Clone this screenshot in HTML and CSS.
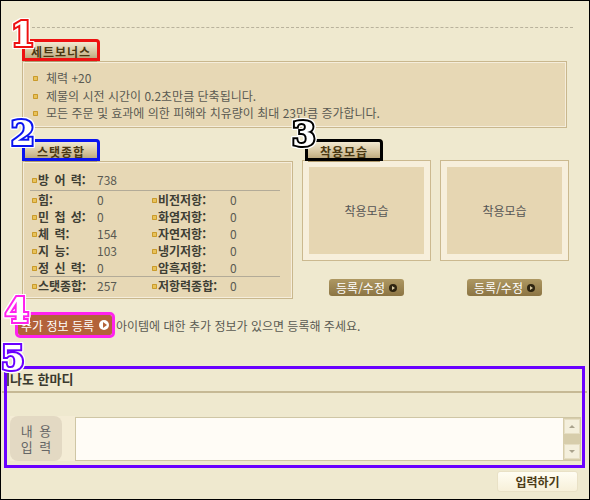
FILE: index.html
```html
<!DOCTYPE html>
<html lang="ko">
<head>
    <meta charset="UTF-8">
    <meta name="viewport" content="width=device-width, initial-scale=1.0">
    <title>아이템 정보</title>
    <link rel="stylesheet" href="styles.css">
</head>
<body>
    <div class="page">
        <div class="dash"></div>
        <div class="main">
            <div class="tab mark-red"><span>세트보너스</span><b class="num num-red">1</b></div>
            <ul class="box bonus">
                <li><i class="dot"></i>체력 +20</li>
                <li><i class="dot"></i>제물의 시전 시간이 0.2초만큼 단축됩니다.</li>
                <li><i class="dot"></i>모든 주문 및 효과에 의한 피해와 치유량이 최대 23만큼 증가합니다.</li>
            </ul>

            <div class="row">
                <div class="stat-col">
                    <div class="tab mark-blue"><span>스탯종합</span><b class="num num-blue">2</b></div>
                    <div class="box stats">
                        <div class="grid">
                            <div class="st"><i class="dot"></i><em>방 어 력:</em>738</div>
                        </div>
                        <div class="sep"></div>
                        <div class="grid">
                            <div class="st"><i class="dot"></i><em>힘:</em>0</div>
                            <div class="st st2"><i class="dot"></i><em>비전저항:</em>0</div>
                            <div class="st"><i class="dot"></i><em>민 첩 성:</em>0</div>
                            <div class="st st2"><i class="dot"></i><em>화염저항:</em>0</div>
                            <div class="st"><i class="dot"></i><em>체 력:</em>154</div>
                            <div class="st st2"><i class="dot"></i><em>자연저항:</em>0</div>
                            <div class="st"><i class="dot"></i><em>지 능:</em>103</div>
                            <div class="st st2"><i class="dot"></i><em>냉기저항:</em>0</div>
                            <div class="st"><i class="dot"></i><em>정 신 력:</em>0</div>
                            <div class="st st2"><i class="dot"></i><em>암흑저항:</em>0</div>
                        </div>
                        <div class="sep sep2"></div>
                        <div class="grid">
                            <div class="st"><i class="dot"></i><em>스탯종합:</em>257</div>
                            <div class="st st2"><i class="dot"></i><em>저항력종합:</em>0</div>
                        </div>
                    </div>
                </div>

                <div class="wear-col">
                    <div class="tab tab-wear mark-black"><span>착용모습</span><b class="num num-black">3</b></div>
                    <div class="frames">
                        <div class="frame"><div class="pic">착용모습</div></div>
                        <div class="frame"><div class="pic">착용모습</div></div>
                    </div>
                    <div class="btns">
                        <div class="cell"><a class="reg">등록/수정<i class="ico-dark"></i></a></div>
                        <div class="cell"><a class="reg">등록/수정<i class="ico-dark"></i></a></div>
                    </div>
                </div>
            </div>

            <div class="extra">
                <a class="add mark-pink">추가 정보 등록<i class="ico-white"></i><b class="num num-pink">4</b></a>
                <span class="note">아이템에 대한 추가 정보가 있으면 등록해 주세요.</span>
            </div>
        </div>

        <div class="comment">
            <div class="mark-violet"></div>
            <b class="num num-violet">5</b>
            <div class="c-head">나도 한마디</div>
            <div class="c-body">
                <div class="c-label"><span>내 용<br>입 력</span></div>
                <div class="c-input">
                    <div class="sb">
                        <div class="sb-btn"><i class="up"></i></div>
                        <div class="sb-btn"><i class="down"></i></div>
                    </div>
                </div>
            </div>
        </div>
        <div class="submit-row">
            <button class="submit">입력하기</button>
        </div>
    </div>
</body>
</html>
```

FILE: styles.css
```css
* {
    box-sizing: border-box;
}
body {
    margin: 0;
    font-family: "Noto Sans CJK KR", "Noto Sans", sans-serif;
    font-size: 12px;
    color: #5a5a52;
}
.page {
    width: 590px;
    height: 500px;
    border: 1px solid #000;
    background: #efe9cf;
    overflow: hidden;
}
.dash {
    margin: 26px 16px 0 21px;
    border-top: 1px dashed #b9b29c;
}
.main {
    margin: 11px 20px 0 21px;
}

/* tabs */
.tab {
    position: relative;
    width: 78px;
    height: 22px;
    padding: 2px 2px 0;
    background: #f4ecd6;
    border: 1px solid #cdbb92;
    border-bottom: 0;
    border-radius: 0 4px 0 0;
}
.tab span {
    display: block;
    height: 20px;
    line-height: 20px;
    text-align: center;
    font-weight: bold;
    letter-spacing: 1px;
    color: #4a3812;
    background: linear-gradient(#f1e8d0, #d2c19a 55%, #ae986a);
}
.mark-red { outline: 3px solid #ee1111; outline-offset: -3px; }
.mark-blue { outline: 3px solid #0a14f0; outline-offset: -3px; }
.mark-black { outline: 3px solid #000; outline-offset: -3px; }
.mark-pink { outline: 3px solid #ff22ee; outline-offset: 0; }

/* numbers */
.num {
    position: absolute;
    z-index: 5;
    font-family: "DejaVu Serif", serif;
    font-size: 34px;
    line-height: 34px;
    font-weight: bold;
    color: #fff;
    -webkit-text-stroke: 4px #000;
    paint-order: stroke fill;
    filter: drop-shadow(1px 0 0 #fff) drop-shadow(-1px 0 0 #fff) drop-shadow(0 1px 0 #fff) drop-shadow(0 -1px 0 #fff);
}
.num-red { left: -12px; top: -23px; -webkit-text-stroke-color: #ee1111; }
.num-blue { left: -12px; top: -24px; -webkit-text-stroke-color: #0a14f0; }
.num-black { left: -14px; top: -23px; }
.num-pink { left: -13px; top: -22px; -webkit-text-stroke-color: #ff22ee; }
.num-violet { left: -1px; top: -25px; -webkit-text-stroke-color: #6a00ff; }

/* boxes */
.box {
    background: #e7d8b5;
    border: 1px solid #c9b78d;
    box-shadow: inset 0 0 0 1px #f5eddb;
}
.dot {
    display: inline-block;
    width: 5px;
    height: 5px;
    border-radius: 1px;
    background: #e8c25a;
    box-shadow: inset 0 0 0 1px #c99a2c;
    vertical-align: middle;
}
.bonus {
    margin: 0 2px 0 0;
    height: 67px;
    padding: 7px 0 0 10px;
    list-style: none;
}
.bonus li {
    line-height: 17.5px;
}
.bonus .dot {
    margin: -2px 8px 0 0;
}

.row {
    display: flex;
    gap: 9px;
    margin-top: 11px;
}
.stat-col {
    width: 271px;
}
.stats {
    height: 138px;
    padding: 9px 12px 0 9px;
}
.grid {
    display: grid;
    grid-template-columns: 120px 1fr;
}
.st {
    line-height: 17px;
    white-space: nowrap;
}
.st em {
    display: inline-block;
    width: 59px;
    margin-left: 1px;
    font-style: normal;
    font-weight: bold;
    color: #3e3e34;
    word-spacing: 2px;
}
.st2 em {
    width: 72px;
}
.st .dot {
    margin-top: -2px;
}
.sep {
    margin: 2px 0 0 -2px;
    border-top: 1px solid #b3ab98;
}
.sep2 {
    margin-top: 0;
}

.wear-col {
    width: 267px;
}
.tab-wear {
    margin-left: 3px;
}
.frames {
    display: flex;
    gap: 9px;
    margin-top: -1px;
}
.frame {
    width: 129px;
    height: 101px;
    padding: 6px;
    background: #f7efdc;
    border: 1px solid #cbb98f;
}
.pic {
    height: 100%;
    display: flex;
    align-items: center;
    justify-content: center;
    background: #e6d6b2;
    color: #555;
}
.btns {
    display: flex;
    gap: 9px;
    margin-top: 18px;
}
.cell {
    width: 129px;
    display: flex;
    justify-content: center;
}
.reg {
    width: 75px;
    height: 17px;
    display: flex;
    align-items: center;
    justify-content: center;
    gap: 4px;
    border-radius: 3px;
    background: linear-gradient(#ae9862, #8b7443);
    color: #fff;
    line-height: 17px;
}
.ico-dark, .ico-white {
    position: relative;
    display: inline-block;
    width: 8px;
    height: 8px;
    border-radius: 50%;
    background: #2e2410;
}
.ico-dark::after, .ico-white::after {
    content: "";
    position: absolute;
    left: 3px;
    top: 2px;
    border-left: 3px solid #d8c9a0;
    border-top: 2px solid transparent;
    border-bottom: 2px solid transparent;
}
.ico-white {
    width: 10px;
    height: 10px;
    background: #fff;
}
.ico-white::after {
    left: 4px;
    top: 2px;
    border-left: 4px solid #b3623a;
    border-top: 3px solid transparent;
    border-bottom: 3px solid transparent;
}

.extra {
    display: flex;
    align-items: center;
    margin: 16px 0 0 -4px;
}
.add {
    position: relative;
    width: 94px;
    height: 20px;
    display: flex;
    align-items: center;
    justify-content: center;
    gap: 5px;
    border-radius: 2px;
    background: #b3623a;
    color: #fff;
}
.note {
    margin-left: 4px;
}

/* comment */
.comment {
    position: relative;
    margin: 31px 2px 0 1px;
}
.mark-violet {
    position: absolute;
    left: 2px;
    right: 2px;
    top: 0;
    height: 102px;
    border: 3px solid #6a00ff;
    z-index: 4;
}
.c-head {
    display: flex;
    align-items: center;
    gap: 1px;
    padding: 4px 0 3px 5px;
    line-height: 18px;
    border-bottom: 2px solid #c6b995;
    font-size: 13px;
    font-weight: bold;
    color: #3a3a2e;
}
.c-head::before {
    content: "";
    width: 2px;
    height: 13px;
    background: #555;
}
.c-body {
    display: flex;
    margin-top: 23px;
    padding: 0 6px 0 8px;
}
.c-label {
    width: 65px;
    height: 45px;
    padding-right: 13px;
    background: #f4ecd5;
}
.c-label span {
    display: flex;
    align-items: center;
    justify-content: center;
    height: 100%;
    border-radius: 8px;
    background: #e3d9c3;
    text-align: center;
    font-size: 13px;
    line-height: 16px;
    word-spacing: 3px;
    color: #666;
}
.c-input {
    flex: 1;
    height: 44px;
    margin-top: 1px;
    display: flex;
    justify-content: flex-end;
    background: #fffcf6;
    border: 1px solid #cfc6a5;
}
.sb {
    width: 17px;
    display: flex;
    flex-direction: column;
    justify-content: space-between;
    padding: 1px 0 1px 1px;
    background: #d7cdab;
}
.sb-btn {
    position: relative;
    height: 15px;
    background: #f4efdc;
    border: 1px solid #e6dec3;
}
.sb-btn i {
    position: absolute;
    left: 4px;
    top: 5px;
    border-left: 3px solid transparent;
    border-right: 3px solid transparent;
}
.sb-btn .up {
    border-bottom: 3px solid #aaa38d;
}
.sb-btn .down {
    border-top: 3px solid #aaa38d;
}
.submit-row {
    display: flex;
    justify-content: flex-end;
    margin: 10px 11px 0 0;
}
.submit {
    width: 81px;
    height: 21px;
    padding: 0;
    border: 1px solid #e9e1c6;
    border-radius: 3px;
    background: linear-gradient(#fffdf3, #f7f0d9);
    font-family: "Noto Sans CJK KR", sans-serif;
    font-size: 12px;
    font-weight: bold;
    color: #4b3b16;
}
```
